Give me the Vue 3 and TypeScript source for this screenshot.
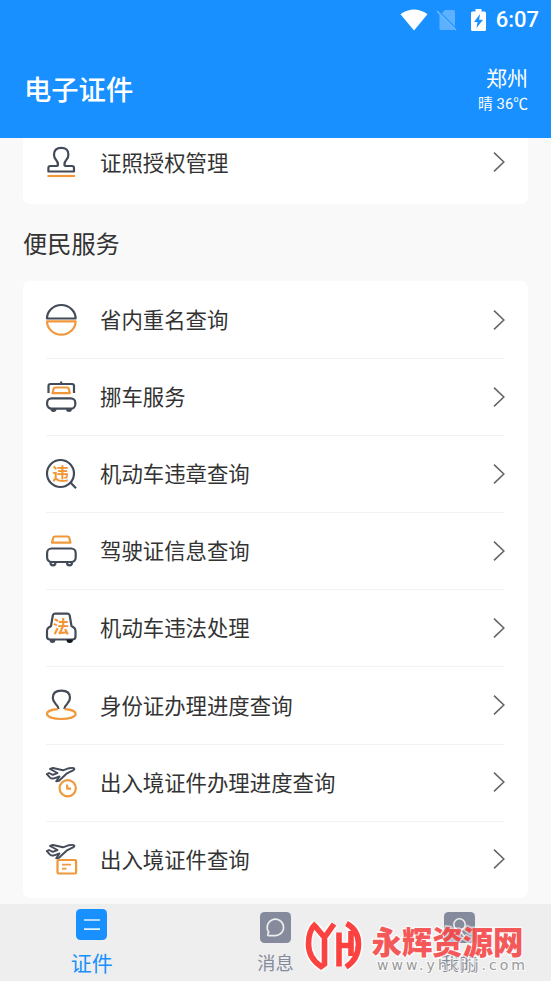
<script setup lang="ts">
type IconName = 'circle' | 'tow' | 'violation' | 'car' | 'law' | 'person' | 'planeClock' | 'planeCard'

interface Service {
  icon: IconName
  label: string
}

const services: Service[] = [
  { icon: 'circle', label: '省内重名查询' },
  { icon: 'tow', label: '挪车服务' },
  { icon: 'violation', label: '机动车违章查询' },
  { icon: 'car', label: '驾驶证信息查询' },
  { icon: 'law', label: '机动车违法处理' },
  { icon: 'person', label: '身份证办理进度查询' },
  { icon: 'planeClock', label: '出入境证件办理进度查询' },
  { icon: 'planeCard', label: '出入境证件查询' },
]
</script>

<template>
  <div class="screen">
    <header class="header">
      <div class="status">
        <svg class="wifi" width="28" height="22" viewBox="0 0 28 22"><path d="M.5 5.2Q14-4 27.5 5.2L14 21.5Z" fill="#fff" /></svg>
        <svg class="sim" width="20" height="22" viewBox="0 0 20 22">
          <path d="M8 1H16.5Q18 1 18 2.500V19.500Q18 21 16.500 21H4Q2.500 21 2.500 19.500V6.500Z" fill="#5eb1ff" />
          <path d="M1 2L19.500 20.500" stroke="#1890ff" stroke-width="2" />
          <path d="M0 2L19 21" stroke="#69b7ff" stroke-width="1.600" />
        </svg>
        <svg class="battery" width="15" height="22" viewBox="0 0 15 22">
          <path d="M1.500 2.500H4.500V0H10.500V2.500H13.500Q15 2.500 15 4V20.500Q15 22 13.500 22H1.500Q0 22 0 20.500V4Q0 2.500 1.500 2.500Z" fill="#fff" />
          <path d="M9 5L3 13H6.500L5.500 19L12 10.800H8.200Z" fill="#1890ff" />
        </svg>
        <span class="time">6:07</span>
      </div>
      <div class="heading">
        <h1>电子证件</h1>
        <div class="weather">
          <span class="city">郑州</span>
          <span class="temp">晴 36℃</span>
        </div>
      </div>
    </header>

    <main class="content">
      <section class="card partial">
        <div class="row">
          <svg class="icon" viewBox="0 0 32 34">
            <path class="dark" d="M13 19.500Q13 17 10.800 14.500Q9 12.500 9 9.500Q9 2.800 16.200 2.800T23.400 9.500Q23.400 12.500 21.600 14.500Q19.400 17 19.400 19.500Q19.400 21 21.500 21H27Q29 21 29 23V26.500H3.400V23Q3.400 21 5.400 21H11Q13 21 13 19.500Z" />
            <path class="orange" d="M2.500 31H30" />
          </svg>
          <span class="label">证照授权管理</span>
          <svg class="chevron" viewBox="0 0 12 20"><path d="M1 .7L10.800 10L1 19.300" /></svg>
        </div>
      </section>

      <h2>便民服务</h2>

      <section class="card">
        <div v-for="item in services" :key="item.icon" class="row">
          <svg class="icon" viewBox="0 0 32 34">
            <template v-if="item.icon === 'circle'">
              <path class="dark" d="M2 15.500A14.300 13.500 0 0 1 30.600 15.500Z" />
              <path class="orange" d="M2 18.300A14.300 13.300 0 0 0 30.600 18.300Z" />
            </template>
            <template v-else-if="item.icon === 'tow'">
              <path class="dark" d="M3.500 13V6Q3.500 4 5.500 4H27Q29 4 29 6V13M16.200 1.500V4" />
              <path class="orange" d="M10.500 7.500H22Q23.500 7.500 23.900 9L24.800 13.200H7.500L8.600 9Q9 7.500 10.500 7.500Z" />
              <rect class="dark" x="2.100" y="18.300" width="28.200" height="10.400" rx="4.500" />
              <path class="wheel" d="M5.500 28.500H11.500V29Q11.500 32 8.500 32T5.500 29ZM21 28.500H27V29Q27 32 24 32T21 29Z" />
            </template>
            <template v-else-if="item.icon === 'violation'">
              <circle class="dark" cx="15.500" cy="16.500" r="13.500" />
              <path class="dark" d="M25 25L31 31.300" />
              <text x="7.200" y="22.800" font-size="16.500">违</text>
            </template>
            <template v-else-if="item.icon === 'car'">
              <path class="orange" d="M10 2.500H22.500Q24 2.500 24.300 4L25.500 8.700H7L8.200 4Q8.500 2.500 10 2.500Z" />
              <rect class="dark" x="2.100" y="14.500" width="28.600" height="13.500" rx="4.500" />
              <path class="dark" d="M5.500 28.500Q5.500 31.300 8 31.300T10.500 28.500M22 28.500Q22 31.300 24.500 31.300T27 28.500" />
            </template>
            <template v-else-if="item.icon === 'law'">
              <path class="dark" d="M10 2.700H22.500Q24.300 2.700 24.700 4.500L26.500 15L28.800 16.500Q30.500 17.500 30.500 20V25.500Q30.500 28.500 27.500 28.500H5Q2 28.500 2 25.500V20Q2 17.500 3.700 16.500L6 15L7.800 4.500Q8.200 2.700 10 2.700Z" />
              <path class="wheel" d="M4.500 28.500H10.500Q10.500 32 7.500 32T4.500 28.500Z" />
              <path fill="#111820" d="M21.500 28.500H28Q28 32 24.700 32T21.500 28.500Z" />
              <text x="7.700" y="22" font-size="16.500">法</text>
            </template>
            <template v-else-if="item.icon === 'person'">
              <path class="dark" d="M13.500 21Q13.300 18.500 10.500 15.800Q7.800 13 7.800 9.800Q7.800 2.600 16.400 2.600T25 9.800Q25 13 22.300 15.800Q19.500 18.500 19.300 21" />
              <path class="orange" d="M13 21.200C6.500 21.500 2 23.500 2 26.100C2 29 8.300 31 16.300 31S30.600 29 30.600 26.100C30.600 23.500 26 21.500 19.600 21.200" />
            </template>
            <template v-else>
              <path class="dark plane" d="M1.800 9L4 8L7.800 9.800L12.500 8L5 4L8 3L18 5.300L24 3.200Q28.500 2.300 29.300 3.500Q29.800 4.800 26.500 6.200L21.500 8.700L14 15.800L11.200 16.300L14.500 11.500L9 13.300Q6.500 14 5 12.600Z" />
              <template v-if="item.icon === 'planeClock'">
                <circle class="orange" cx="22.700" cy="23.200" r="8.100" />
                <path class="orange" d="M22.200 19.500V23.700H26" />
              </template>
              <template v-else>
                <rect class="orange" x="12.500" y="18" width="18.600" height="13.500" rx="1" />
                <path class="orange thin" d="M17 22.700H26M17 26.700H21.500" />
              </template>
            </template>
          </svg>
          <span class="label">{{ item.label }}</span>
          <svg class="chevron" viewBox="0 0 12 20"><path d="M1 .7L10.800 10L1 19.300" /></svg>
        </div>
      </section>
    </main>

    <nav class="tabs">
      <div class="tab active">
        <svg width="31" height="31" viewBox="0 0 31 31">
          <rect width="31" height="31" rx="4.500" fill="#1890ff" />
          <path d="M8 11H24M8 20.200H24" stroke="#e2f1ff" stroke-width="1.700" />
        </svg>
        <span>证件</span>
      </div>
      <div class="tab">
        <svg width="31" height="31" viewBox="0 0 31 31">
          <rect width="31" height="31" rx="4.500" fill="#858b9c" />
          <path d="M8.800 20.300A8.200 8.200 0 1 1 15.700 23.600H8.300Q6.800 22.800 8.800 20.300Z" fill="none" stroke="#eee" stroke-width="1.600" />
        </svg>
        <span>消息</span>
      </div>
      <div class="tab">
        <svg width="31" height="31" viewBox="0 0 31 31">
          <rect width="31" height="31" rx="4.500" fill="#858b9c" />
          <circle cx="15.500" cy="12.500" r="5.700" fill="none" stroke="#eee" stroke-width="1.600" />
          <path d="M17 20L21 25" fill="none" stroke="#eee" stroke-width="1.600" />
        </svg>
        <span>我的</span>
      </div>
    </nav>

    <svg class="watermark" width="251" height="66" viewBox="0 0 251 66">
      <g v-for="layer in ['halo', 'emblem']" :key="layer" :class="layer">
        <path d="M16 12.500Q8.500 19 8.500 33Q8.500 47 21 55.500L24.500 53V28M14.500 14.500L24.500 26.500L34 13M39 21.500V55.500M39 34.500H51M51 20V45M46.500 12.500Q58.500 19 58.500 33Q58.500 48 46 56" />
      </g>
      <text class="brand" x="71.500" y="42.500" textLength="152" lengthAdjust="spacingAndGlyphs">永辉资源网</text>
      <text class="site" x="77" y="59" textLength="148">www.yhkjjj.com</text>
    </svg>
  </div>
</template>

<style>
body {
  margin: 0;
}
</style>

<style scoped>
.screen {
  position: relative;
  display: flex;
  flex-direction: column;
  width: 551px;
  height: 981px;
  overflow: hidden;
  background: #f9f9f9;
  color: #333;
  font-family: Roboto, "Noto Sans CJK SC", sans-serif;
}
.header {
  flex: none;
  height: 138px;
  background: #1890ff;
  color: #fff;
}
.status {
  display: flex;
  align-items: center;
  justify-content: flex-end;
  height: 40px;
  padding-right: 12px;
}
.sim { margin-left: 9px; }
.battery { margin-left: 14px; }
.time {
  margin-left: 10px;
  font-size: 22px;
  font-weight: 500;
  line-height: 40px;
}
.heading {
  display: flex;
  justify-content: space-between;
  align-items: center;
  height: 98px;
  padding: 0 23px 0 24px;
  box-sizing: border-box;
}
h1 {
  margin: 3px 0 0;
  font-size: 27.300px;
  font-weight: 500;
  line-height: 40px;
}
.weather {
  display: flex;
  flex-direction: column;
  align-items: flex-end;
  margin-top: 4px;
}
.city {
  font-size: 21px;
  line-height: 26px;
}
.temp {
  font-size: 14.800px;
  line-height: 24px;
}
.content {
  flex: 1;
  min-height: 0;
  padding: 0 23px;
}
.card {
  border-radius: 7px;
  background: #fff;
  padding: 0 23px 0 22px;
}
.partial {
  display: flex;
  align-items: flex-start;
  height: 66px;
  border-radius: 0 0 7px 7px;
}
.partial .row {
  height: 48px;
}
.row {
  display: flex;
  align-items: center;
  width: 100%;
  height: 77.100px;
  box-sizing: border-box;
}
.row + .row {
  background: linear-gradient(#f3f3f3, #f3f3f3) 1px 0 / 100% 1px no-repeat;
}
.icon {
  width: 32px;
  height: 34px;
  overflow: visible;
}
.dark, .orange {
  fill: none;
  stroke: #434b59;
  stroke-width: 2.200;
  stroke-linejoin: round;
}
.orange { stroke: #f0983a; }
.plane { stroke-width: 1.900; }
.thin { stroke-width: 1.800; }
.wheel { fill: #434b59; }
.icon text {
  fill: #f29532;
  font-family: "Noto Sans CJK SC", sans-serif;
  font-weight: 700;
}
.label {
  flex: 1;
  margin-left: 23px;
  padding-top: 3px;
  font-size: 21.400px;
  line-height: 30px;
}
.chevron {
  width: 12px;
  height: 20px;
  fill: none;
  stroke: #666;
  stroke-width: 1.600;
}
h2 {
  margin: 0;
  height: 77px;
  padding-top: 5px;
  box-sizing: border-box;
  font-size: 24.200px;
  font-weight: 400;
  line-height: 72px;
}
.tabs {
  display: grid;
  grid-template-columns: repeat(3, 1fr);
  flex: none;
  height: 77px;
  background: #eee;
}
.tab {
  display: flex;
  flex-direction: column;
  align-items: center;
  padding-top: 8px;
  color: #858b9c;
  font-size: 18.200px;
}
.tab span {
  margin-top: 7px;
  line-height: 28px;
}
.active {
  padding-top: 5px;
  color: #1890ff;
  font-size: 21px;
}
.active span { margin-top: 10px; }
.watermark {
  position: absolute;
  left: 300px;
  top: 911px;
  overflow: visible;
}
.emblem, .halo {
  fill: none;
  stroke: #fb4240;
  stroke-width: 5.600;
}
.halo {
  stroke: #fff;
  stroke-width: 9;
  stroke-linejoin: round;
  opacity: .8;
}
.brand {
  fill: #f53c3cdd;
  stroke: #fff9;
  stroke-width: 3;
  paint-order: stroke;
  font-family: "Noto Sans CJK SC", sans-serif;
  font-size: 31.500px;
  font-weight: 900;
}
.site {
  fill: #999;
  stroke: #fffb;
  stroke-width: 2;
  paint-order: stroke;
  font-family: "DejaVu Sans", sans-serif;
  font-size: 14px;
}
</style>
